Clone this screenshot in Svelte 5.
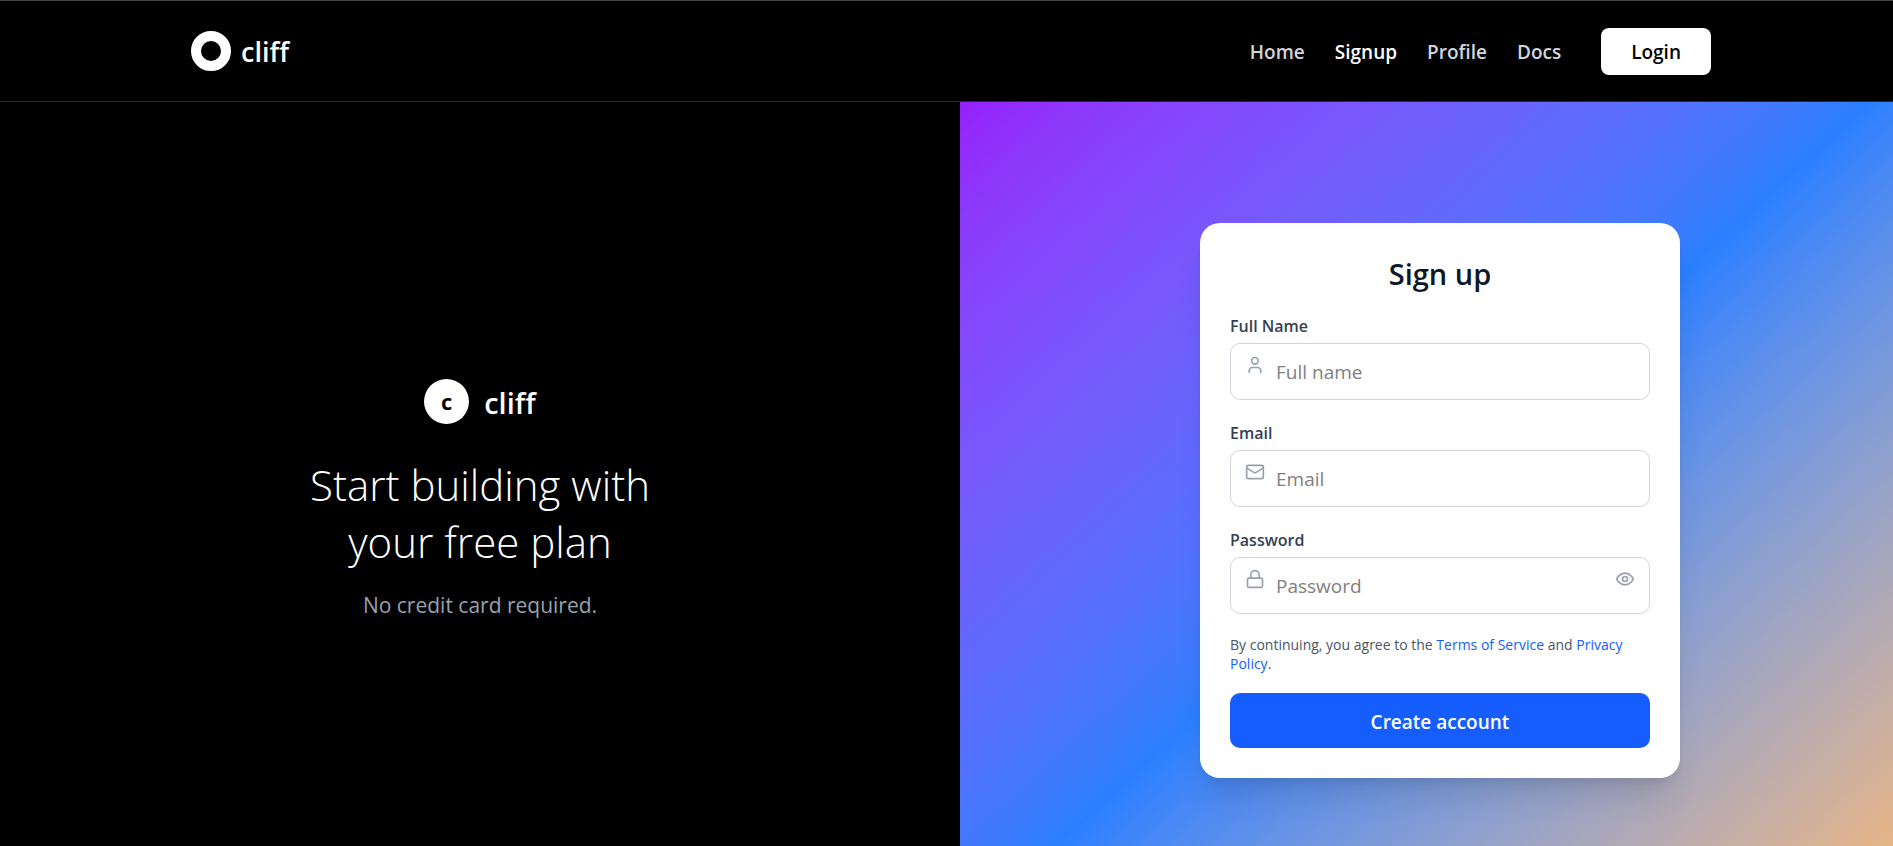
<script>
  const links = [
    { label: 'Home' },
    { label: 'Signup', active: true },
    { label: 'Profile' },
    { label: 'Docs' }
  ];

  let fullName = $state('');
  let email = $state('');
  let password = $state('');
  let visible = $state(false);
</script>

<div class="page">
  <header class="topbar">
    <a class="brand" href="#home">
      <span class="ring"></span>
      <span class="word">cliff</span>
    </a>
    <nav class="nav">
      {#each links as link}
        <a class:active={link.active} href={'#' + link.label.toLowerCase()}>{link.label}</a>
      {/each}
      <button class="login" type="button">Login</button>
    </nav>
  </header>

  <main class="panels">
    <section class="intro">
      <div class="mark">
        <span class="disc">c</span>
        <span class="word">cliff</span>
      </div>
      <h1>Start building with<br />your free plan</h1>
      <p>No credit card required.</p>
    </section>

    <section class="signup">
      <form class="card" onsubmit={(e) => e.preventDefault()}>
        <h2>Sign up</h2>

        <div class="field">
          <label for="full-name">Full Name</label>
          <div class="control">
            <svg class="icon" viewBox="0 0 24 24" aria-hidden="true">
              <path d="M19 21v-2a4 4 0 0 0-4-4H9a4 4 0 0 0-4 4v2" />
              <circle cx="12" cy="7" r="4" />
            </svg>
            <input id="full-name" type="text" placeholder="Full name" bind:value={fullName} />
          </div>
        </div>

        <div class="field">
          <label for="email">Email</label>
          <div class="control">
            <svg class="icon" viewBox="0 0 24 24" aria-hidden="true">
              <rect x="2" y="4" width="20" height="16" rx="2" />
              <path d="m22 7-8.97 5.7a1.94 1.94 0 0 1-2.06 0L2 7" />
            </svg>
            <input id="email" type="email" placeholder="Email" bind:value={email} />
          </div>
        </div>

        <div class="field">
          <label for="password">Password</label>
          <div class="control">
            <svg class="icon" viewBox="0 0 24 24" aria-hidden="true">
              <rect x="3" y="11" width="18" height="11" rx="2" />
              <path d="M7 11V7a5 5 0 0 1 10 0v4" />
            </svg>
            <input id="password" type={visible ? 'text' : 'password'} placeholder="Password" bind:value={password} />
            <button class="reveal" type="button" aria-label="Show password" onclick={() => (visible = !visible)}>
              <svg viewBox="0 0 24 24" aria-hidden="true">
                <path d="M2 12s3-7 10-7 10 7 10 7-3 7-10 7-10-7-10-7Z" />
                <circle cx="12" cy="12" r="3" />
              </svg>
            </button>
          </div>
        </div>

        <p class="terms">
          By continuing, you agree to the <a href="#terms">Terms of Service</a> and <a href="#privacy">Privacy Policy</a>.
        </p>
        <button class="submit" type="submit">Create account</button>
      </form>
    </section>
  </main>
</div>

<style>
  :global(body) {
    margin: 0;
    background: #000;
  }

  .page,
  .page * {
    box-sizing: border-box;
  }

  .page {
    display: flex;
    flex-direction: column;
    min-height: 100vh;
    background: #000;
    color: #fff;
    font-family: 'Open Sans', 'Noto Sans', sans-serif;
  }

  a {
    color: inherit;
    text-decoration: none;
  }

  button,
  input {
    font-family: inherit;
  }

  .topbar {
    display: flex;
    align-items: center;
    justify-content: space-between;
    height: 102px;
    padding: 0 182px 0 191px;
    border-top: 1px solid #45453a;
    border-bottom: 1px solid #1e2939;
  }

  .brand {
    display: flex;
    align-items: center;
    gap: 10px;
    font-size: 27px;
    font-weight: 600;
  }

  .ring {
    width: 40px;
    height: 40px;
    border: 10px solid #fff;
    border-radius: 50%;
  }

  .nav {
    display: flex;
    align-items: center;
    gap: 30px;
    color: #d1d5dc;
    font-size: 19px;
    font-weight: 600;
  }

  .nav a {
    padding-top: 2px;
  }

  .nav .active {
    color: #fff;
  }

  .login {
    height: 47px;
    margin-left: 10px;
    padding: 2px 30px 0;
    border: 0;
    border-radius: 8px;
    background: #fff;
    color: #000;
    font-size: 19px;
    font-weight: 600;
  }

  .panels {
    flex: 1;
    display: grid;
    grid-template-columns: 960fr 933fr;
  }

  .intro {
    display: flex;
    flex-direction: column;
    align-items: center;
    justify-content: center;
    padding-top: 53px;
    text-align: center;
  }

  .mark {
    display: flex;
    align-items: center;
    gap: 15px;
    font-size: 29px;
    font-weight: 600;
    line-height: 45px;
  }

  .mark .word {
    padding-top: 2px;
  }

  .disc {
    width: 45px;
    height: 45px;
    border-radius: 50%;
    background: #fff;
    color: #000;
    font-size: 22px;
    font-weight: 700;
    text-align: center;
  }

  h1 {
    margin: 31px 0 18px;
    font-size: 42px;
    font-weight: 300;
    line-height: 57px;
  }

  .intro p {
    margin: 0;
    color: #99a1af;
    font-size: 21px;
    line-height: 35px;
  }

  .signup {
    display: flex;
    align-items: center;
    justify-content: center;
    padding: 53px 0 0 27px;
    background: linear-gradient(to bottom right in oklab, #9810fa, #2b7fff, #ffb86a) 0 -45px / calc(100% + 27px) calc(100% + 132px) no-repeat;
  }

  .card {
    display: flex;
    flex-direction: column;
    gap: 20px;
    width: 100%;
    max-width: 480px;
    padding: 30px;
    border-radius: 20px;
    background: #fff;
    box-shadow: 0 25px 31px -6px rgb(0 0 0 / 0.1), 0 10px 12px -7px rgb(0 0 0 / 0.1);
  }

  h2 {
    margin: 0;
    padding-top: 2px;
    color: #101828;
    font-size: 29px;
    font-weight: 600;
    line-height: 38px;
    text-align: center;
  }

  .field {
    display: flex;
    flex-direction: column;
    gap: 3px;
  }

  label {
    color: #364153;
    font-size: 16px;
    font-weight: 600;
    line-height: 27px;
  }

  .control {
    position: relative;
    display: flex;
  }

  svg {
    display: block;
    width: 20px;
    height: 20px;
    fill: none;
    stroke: #99a1af;
    stroke-width: 2;
    stroke-linecap: round;
    stroke-linejoin: round;
  }

  .icon {
    position: absolute;
    top: 12px;
    left: 15px;
  }

  .reveal {
    position: absolute;
    top: 12px;
    right: 15px;
    padding: 0;
    border: 0;
    background: none;
  }

  input {
    width: 100%;
    height: 57px;
    padding: 1px 45px 0;
    border: 1px solid #d1d5dc;
    border-radius: 10px;
    background: #fff;
    color: #101828;
    font-size: 19px;
  }

  input::placeholder {
    color: #808080;
    opacity: 1;
  }

  .terms {
    margin: 0;
    padding-top: 1px;
    color: #4a5565;
    font-size: 14px;
    line-height: 19px;
  }

  .terms a {
    color: #155dfc;
  }

  .submit {
    height: 55px;
    padding: 2px 0 0;
    border: 0;
    border-radius: 10px;
    background: #155dfc;
    color: #fff;
    font-size: 19px;
    font-weight: 600;
  }

  @media (max-width: 1100px) {
    .topbar {
      padding: 0 30px;
    }

    .panels {
      grid-template-columns: 1fr;
    }

    .intro,
    .signup {
      padding: 53px 27px;
    }
  }
</style>
